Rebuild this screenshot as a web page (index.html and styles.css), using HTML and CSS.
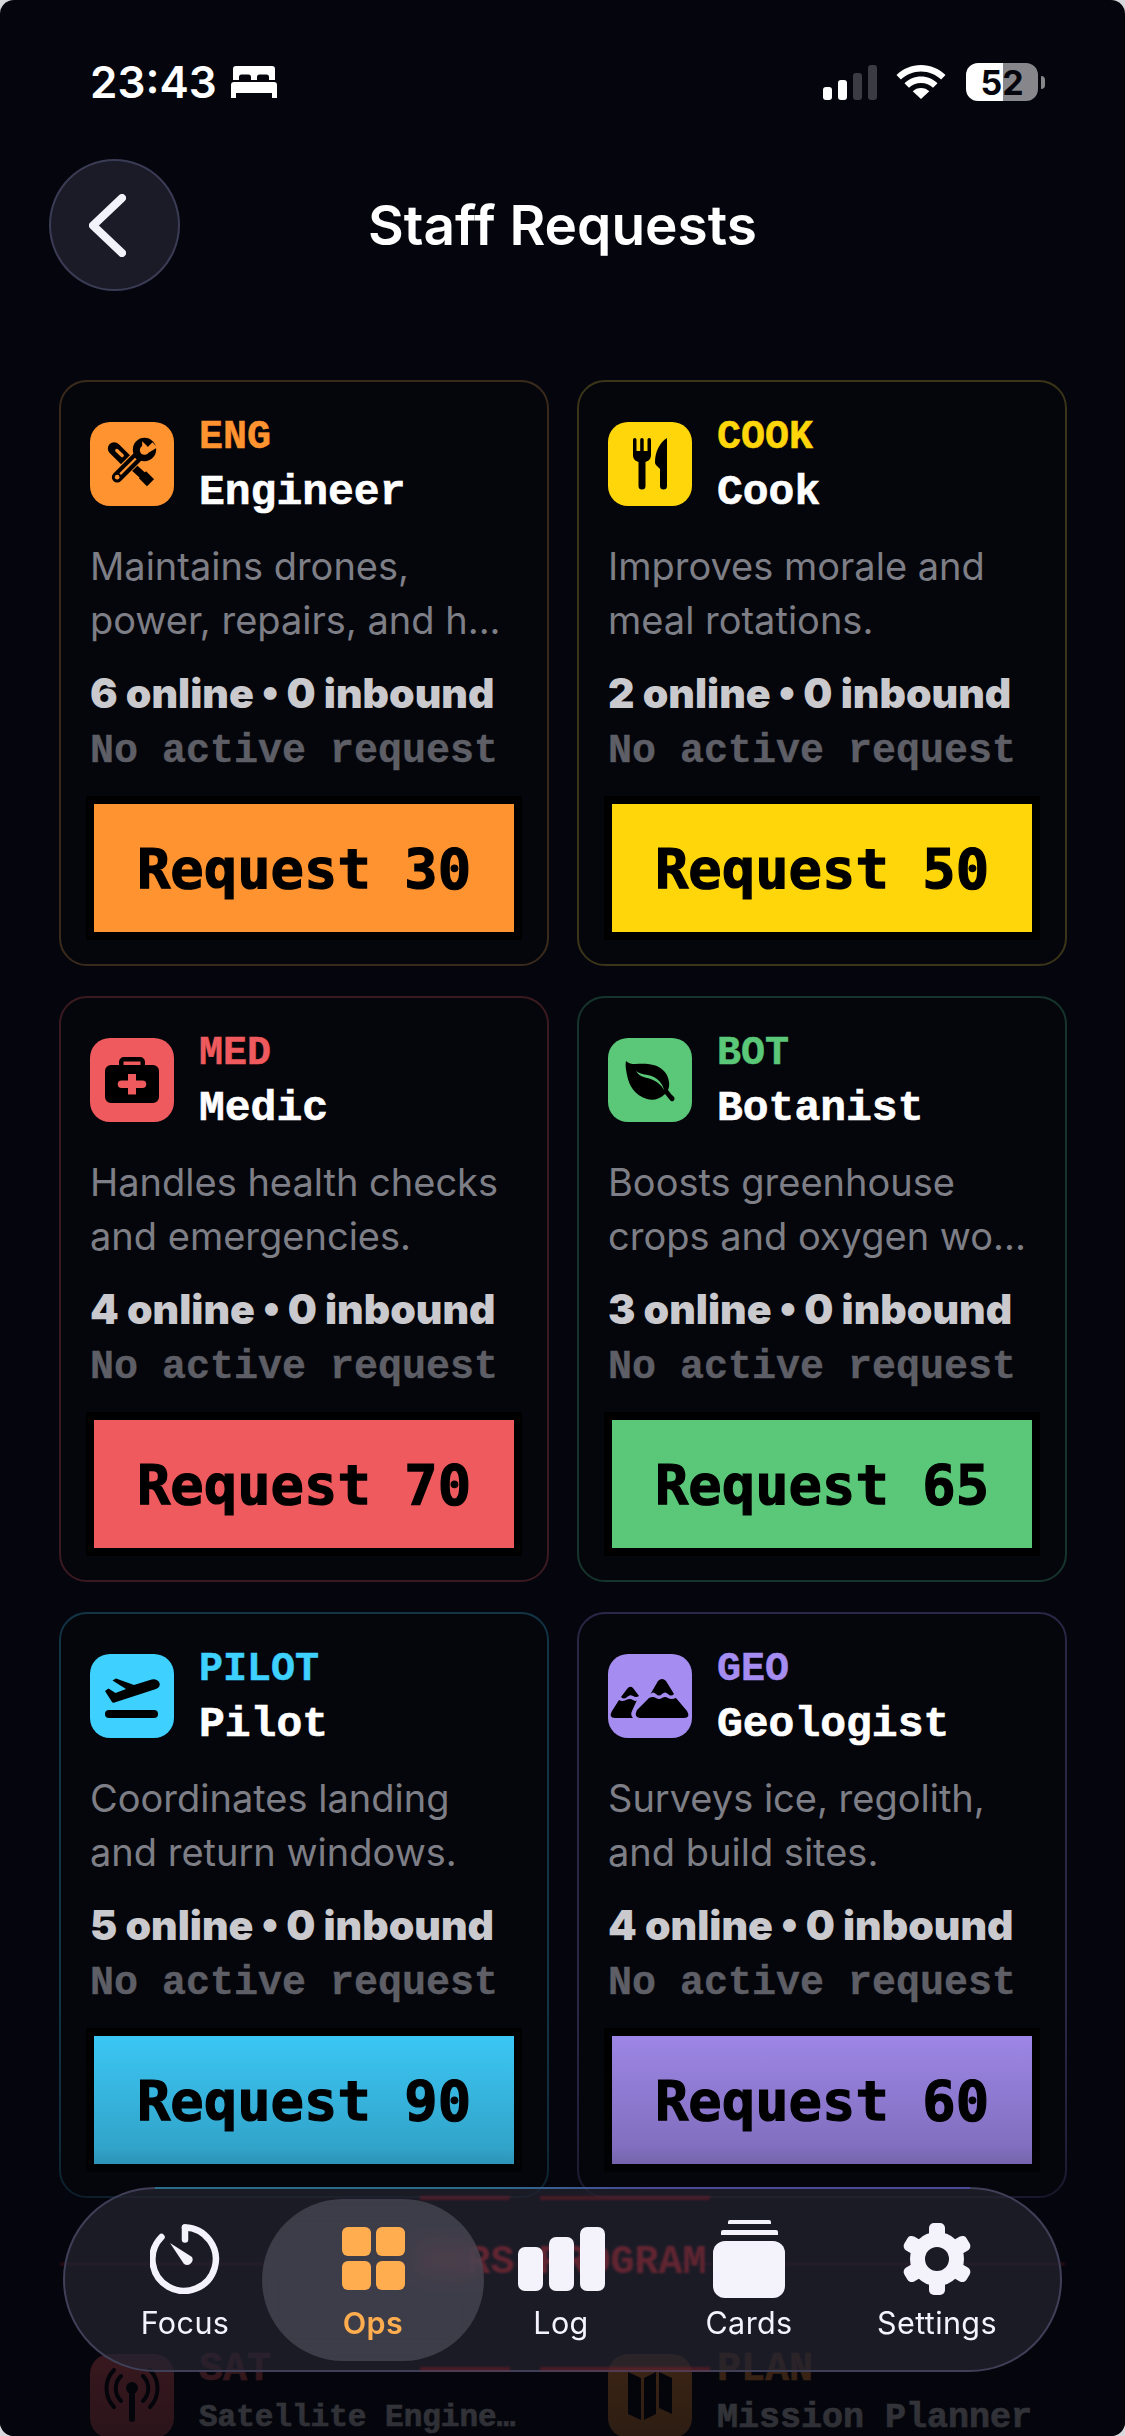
FILE: index.html
```html
<!DOCTYPE html>
<html lang="en">
<head>
    <meta charset="UTF-8">
    <meta name="viewport" content="width=device-width, initial-scale=1.0">
    <title>Staff Requests</title>
    <link rel="stylesheet" href="styles.css">
</head>
<body>
<div class="screen">
    <div class="status-bar">
        <div class="status-left">
            <span class="clock">23:43</span>
            <svg class="bed" viewBox="0 0 46 32"><path d="M5 0h36a3 3 0 0 1 3 3v11h-6v-3a2.500 2.500 0 0 0-2.500-2.500h-7A2.500 2.500 0 0 0 26 11v3h-6v-3a2.500 2.500 0 0 0-2.500-2.500h-7A2.500 2.500 0 0 0 8 11v3H2V3a3 3 0 0 1 3-3z" fill="#fff"/><path d="M3 16h40a3 3 0 0 1 3 3v13h-5v-5H5v5H0V19a3 3 0 0 1 3-3z" fill="#fff"/></svg>
        </div>
        <div class="status-right">
            <div class="signal">
                <span class="bar bar-1"></span>
                <span class="bar bar-2"></span>
                <span class="bar bar-3"></span>
                <span class="bar bar-4"></span>
            </div>
            <svg class="wifi" viewBox="0 0 50 34"><path d="M25 0c9.500 0 18 3.700 24.500 10l-4.400 4.600C39.800 9.500 32.800 6.500 25 6.500S10.200 9.500 4.900 14.600L.5 10C7 3.700 15.500 0 25 0z" fill="#fff"/><path d="M25 11.500c6.400 0 12.200 2.500 16.500 6.700l-4.500 4.600c-3.100-3-7.300-4.900-12-4.900s-8.900 1.900-12 4.900l-4.500-4.600C12.800 14 18.600 11.500 25 11.500z" fill="#fff"/><path d="M25 23c3.200 0 6.100 1.200 8.300 3.300L25 34l-8.300-7.700C18.900 24.200 21.800 23 25 23z" fill="#fff"/></svg>
            <div class="battery"><span class="battery-num">52</span></div>
            <span class="battery-nub"></span>
        </div>
    </div>

    <div class="header">
        <div class="back-btn">
            <svg viewBox="0 0 37 63"><path d="M33 4 4 31.500 33 59" fill="none" stroke="#f2f2fa" stroke-width="8" stroke-linecap="round" stroke-linejoin="round"/></svg>
        </div>
        <h1>Staff Requests</h1>
    </div>

    <div class="grid">
        <div class="card eng">
            <div class="card-top">
                <div class="icon-box">
                    <svg viewBox="54.500 57.500 168 168">
                        <path d="M85 95l40 40" stroke="#000" stroke-width="38" stroke-linecap="round" fill="none"/>
                        <path d="M93 101l16 15" stroke="#ff9330" stroke-width="10" stroke-linecap="round" fill="none"/>
                        <path d="M125 135l50 45" stroke="#000" stroke-width="22" fill="none"/>
                        <path d="M170 174l24 24" stroke="#000" stroke-width="30" fill="none"/>
                        <path d="M170 105 92 182" stroke="#ff9330" stroke-width="38" stroke-linecap="round" fill="none"/>
                        <path d="M166 109 94 181" stroke="#000" stroke-width="32" stroke-linecap="round" fill="none"/>
                        <circle cx="176" cy="98" r="35"/>
                        <path d="M150 125 103 172" stroke="#ff9330" stroke-width="7" fill="none"/>
                        <circle cx="94" cy="181" r="7" fill="#ff9330"/>
                        <circle cx="176" cy="100" r="14" fill="#ff9330"/>
                        <path d="M176 100l24-24 14 16-26 16z" fill="#ff9330"/>
                        <path d="M169 73l14 14-14 14z" fill="#ff9330"/>
                    </svg>
                </div>
                <div class="card-names">
                    <span class="code">ENG</span>
                    <span class="name">Engineer</span>
                </div>
            </div>
            <p class="desc">Maintains drones,<br>power, repairs, and h...</p>
            <p class="stats">6 online • 0 inbound</p>
            <p class="status">No active request</p>
            <div class="request-btn">Request 30</div>
        </div>
        <div class="card cook">
            <div class="card-top">
                <div class="icon-box">
                    <svg viewBox="0 0 56 56"><rect x="11" y="2" width="3.500" height="18" rx="1.700"/><rect x="18.200" y="2" width="3.500" height="18" rx="1.700"/><rect x="25.500" y="2" width="3.500" height="18" rx="1.700"/><path d="M11 15h18v4c0 4-2.500 6-5.500 7v24a3.500 3.500 0 0 1-7 0V26c-3-1-5.500-3-5.500-7z"/><path d="M45 2v48a3.500 3.500 0 0 1-7 0V33l-4-4c-.8-.8-1-2-1-3C33 16 38 6 45 2z"/></svg>
                </div>
                <div class="card-names">
                    <span class="code">COOK</span>
                    <span class="name">Cook</span>
                </div>
            </div>
            <p class="desc">Improves morale and<br>meal rotations.</p>
            <p class="stats">2 online • 0 inbound</p>
            <p class="status">No active request</p>
            <div class="request-btn">Request 50</div>
        </div>
        <div class="card med">
            <div class="card-top">
                <div class="icon-box">
                    <svg viewBox="0 0 56 56"><path d="M15 14v-4a5 5 0 0 1 5-5h16a5 5 0 0 1 5 5v4h-4.500v-4.500h-17V14z"/><path fill-rule="evenodd" d="M7 13h42a6 6 0 0 1 6 6v26a6 6 0 0 1-6 6H7a6 6 0 0 1-6-6V19a6 6 0 0 1 6-6zm17 9v6.500h-6.500a2 2 0 0 0 0 7.500H24v6.500h8V36h6.500a2 2 0 0 0 0-7.500H32V22z"/></svg>
                </div>
                <div class="card-names">
                    <span class="code">MED</span>
                    <span class="name">Medic</span>
                </div>
            </div>
            <p class="desc">Handles health checks<br>and emergencies.</p>
            <p class="stats">4 online • 0 inbound</p>
            <p class="status">No active request</p>
            <div class="request-btn">Request 70</div>
        </div>
        <div class="card bot">
            <div class="card-top">
                <div class="icon-box">
                    <svg viewBox="0 0 56 56"><path fill-rule="evenodd" d="M4 9c5 5 12 2 22 3 12 1 20 8 21 18 .5 3 0 6-1 8 2 3 4 5 6 7 2 3-2 6-4 3-2-2-3-4-5-6-5 5-12 7-18 5C12 43 7 33 5 23 4 18 3 13 4 9zm10 10c6 5 14 2 21 8 4 3 6 7 7 11-3-5-6-8-11-10-6-3-13-2-17-9z"/></svg>
                </div>
                <div class="card-names">
                    <span class="code">BOT</span>
                    <span class="name">Botanist</span>
                </div>
            </div>
            <p class="desc">Boosts greenhouse<br>crops and oxygen wo...</p>
            <p class="stats">3 online • 0 inbound</p>
            <p class="status">No active request</p>
            <div class="request-btn">Request 65</div>
        </div>
        <div class="card pilot">
            <div class="card-top">
                <div class="icon-box">
                    <svg viewBox="0 0 56 56"><path d="M8 34 1 23l3.500-2.500 7 4.500L22 21 8.500 12.500 12 10.500 30 17l16-5c4-1.500 8-.5 9.500 3 1 3-1 5-3.500 6L10.500 34.500c-1 .3-1.800.3-2.500-.5z"/><rect x="1" y="42" width="53" height="8" rx="4"/></svg>
                </div>
                <div class="card-names">
                    <span class="code">PILOT</span>
                    <span class="name">Pilot</span>
                </div>
            </div>
            <p class="desc">Coordinates landing<br>and return windows.</p>
            <p class="stats">5 online • 0 inbound</p>
            <p class="status">No active request</p>
            <div class="request-btn">Request 90</div>
        </div>
        <div class="card geo">
            <div class="card-top">
                <div class="icon-box">
                    <svg class="geo-icon" viewBox="0 0 84 84"><path d="M50 27q4-4 8 0l8 13q-3 3-6 0t-6 0-6 0-5.500 0z"/><path d="M41 44q4-2 7 0t6 0 6 0 8 0l11 13q4 7-3 7H34q-9 0-5-8z"/><path d="M19 35q3-4 6-1l6 8q-3 2-6 0t-6 1-6 0z"/><path d="M11 46q3 2 7 0t7 0 4 0l-5 11q-2 4 1 7H7q-7 0-3-7z"/></svg>
                </div>
                <div class="card-names">
                    <span class="code">GEO</span>
                    <span class="name">Geologist</span>
                </div>
            </div>
            <p class="desc">Surveys ice, regolith,<br>and build sites.</p>
            <p class="stats">4 online • 0 inbound</p>
            <p class="status">No active request</p>
            <div class="request-btn">Request 60</div>
        </div>
    </div>

    <div class="section-title">MARS PROGRAM</div>

    <div class="grid">
        <div class="card sat">
            <div class="card-top">
                <div class="icon-box">
                    <svg viewBox="0 0 56 56"><circle cx="28" cy="20" r="6"/><rect x="25" y="24" width="6" height="30" rx="3"/><path d="M17 8C10 15 10 26 17 33M39 8c7 7 7 18 0 25M10 2C0 12 0 29 10 39M46 2c10 10 10 27 0 37" fill="none" stroke="#000" stroke-width="4" stroke-linecap="round"/></svg>
                </div>
                <div class="card-names">
                    <span class="code">SAT</span>
                    <span class="name name-long">Satellite Engine…</span>
                </div>
            </div>
        </div>
        <div class="card plan">
            <div class="card-top">
                <div class="icon-box">
                    <svg viewBox="0 0 56 56"><path d="M6 4l13 6v42L6 46zM22 10l12-6v42l-12 6zM37 4l13 6v36l-13-6z"/></svg>
                </div>
                <div class="card-names">
                    <span class="code">PLAN</span>
                    <span class="name name-mid">Mission Planner</span>
                </div>
            </div>
        </div>
    </div>

    <div class="bottom-fade"></div>

    <nav class="tab-bar">
        <span class="streak streak-top-a"></span>
        <span class="streak streak-top-b"></span>
        <span class="streak streak-bottom-a"></span>
        <span class="streak streak-bottom-b"></span>
        <div class="tab">
            <div class="tab-slot">
                <svg class="focus-icon" viewBox="0 0 70 70"><path d="M35 3.500a31.700 31.700 0 1 1-23.500 9.500" fill="none" stroke="#f4f3fb" stroke-width="6.500" stroke-linecap="round"/><path d="M35 3.500v12" fill="none" stroke="#f4f3fb" stroke-width="6.500" stroke-linecap="round"/><path d="M20 19l22 14a5.500 5.500 0 0 1-8 7z" fill="#f4f3fb"/></svg>
            </div>
            <span>Focus</span>
        </div>
        <div class="tab active">
            <div class="tab-slot">
                <div class="ops-icon"><i></i><i></i><i></i><i></i></div>
            </div>
            <span>Ops</span>
        </div>
        <div class="tab">
            <div class="tab-slot">
                <div class="log-icon"><i></i><i></i><i></i></div>
            </div>
            <span>Log</span>
        </div>
        <div class="tab">
            <div class="tab-slot">
                <div class="cards-icon"><i></i><i></i><i></i></div>
            </div>
            <span>Cards</span>
        </div>
        <div class="tab">
            <div class="tab-slot">
                <svg class="gear-icon" viewBox="-37 -37 74 74">
                    <g fill="#f4f3fb">
                        <circle r="27"/>
                        <rect x="-8" y="-36" width="16" height="20" rx="5"/>
                        <rect x="-8" y="-36" width="16" height="20" rx="5" transform="rotate(60)"/>
                        <rect x="-8" y="-36" width="16" height="20" rx="5" transform="rotate(120)"/>
                        <rect x="-8" y="-36" width="16" height="20" rx="5" transform="rotate(180)"/>
                        <rect x="-8" y="-36" width="16" height="20" rx="5" transform="rotate(240)"/>
                        <rect x="-8" y="-36" width="16" height="20" rx="5" transform="rotate(300)"/>
                    </g>
                    <circle r="12" fill="#1b1b25"/>
                </svg>
            </div>
            <span>Settings</span>
        </div>
    </nav>
</div>
</body>
</html>
```
FILE: styles.css
```css
* {
    box-sizing: border-box;
}
html, body {
    margin: 0;
    padding: 0;
    background: #d8d8dc;
}
.screen {
    position: relative;
    width: 1125px;
    height: 2436px;
    overflow: hidden;
    border-radius: 14px;
    background: #05060d;
    font-family: Inter, "Liberation Sans", sans-serif;
    color: #fff;
}

/* status bar */
.status-bar {
    display: flex;
    justify-content: space-between;
    align-items: center;
    height: 38px;
    margin-top: 63px;
    padding: 0 80px 0 90px;
}
.status-left {
    display: flex;
    align-items: center;
    gap: 14px;
}
.clock {
    font-size: 44px;
    font-weight: 600;
    line-height: 38px;
}
.bed {
    width: 46px;
    height: 32px;
}
.status-right {
    display: flex;
    align-items: center;
}
.signal {
    display: flex;
    align-items: flex-end;
    gap: 6px;
    height: 35px;
    margin-right: 19px;
}
.bar {
    width: 9px;
    border-radius: 3px;
    background: #fff;
}
.bar-1 { height: 13px; }
.bar-2 { height: 20px; }
.bar-3 { height: 27px; background: #3a3b43; }
.bar-4 { height: 35px; background: #3a3b43; }
.wifi {
    width: 50px;
    height: 34px;
    margin-right: 20px;
}
.battery {
    display: flex;
    align-items: center;
    justify-content: center;
    width: 72px;
    height: 38px;
    border-radius: 12px;
    background: linear-gradient(to right, #fff 51%, #87878b 51%);
}
.battery-num {
    color: #05060d;
    font-size: 34px;
    font-weight: 700;
}
.battery-nub {
    width: 4px;
    height: 13px;
    margin-left: 3px;
    border-radius: 0 4px 4px 0;
    background: #87878b;
}

/* header */
.header {
    position: relative;
    display: flex;
    align-items: center;
    justify-content: center;
    height: 132px;
    margin: 58px 0 89px;
}
.back-btn {
    position: absolute;
    left: 49px;
    top: 0;
    display: flex;
    align-items: center;
    justify-content: center;
    width: 131px;
    height: 132px;
    padding-right: 14px;
    border: 2px solid #3a3c55;
    border-radius: 50%;
    background: #1a1b26;
}
.back-btn svg {
    width: 37px;
    height: 63px;
}
h1 {
    margin: 0;
    font-size: 55px;
    font-weight: 600;
}

/* cards */
.grid {
    display: grid;
    grid-template-columns: 490px 490px;
    column-gap: 28px;
    row-gap: 30px;
    padding-left: 59px;
}
.card {
    height: 586px;
    padding: 40px 29px 0;
    border: 2px solid var(--edge);
    border-radius: 28px;
    background: #05060b;
}
.card-top {
    display: flex;
    align-items: flex-start;
    gap: 25px;
}
.icon-box {
    display: flex;
    align-items: center;
    justify-content: center;
    flex: none;
    width: 84px;
    height: 84px;
    border-radius: 20px;
    background: var(--accent);
}
.icon-box svg {
    width: 56px;
    height: 56px;
}
.icon-box .geo-icon {
    width: 84px;
    height: 84px;
}
.card-names {
    display: flex;
    flex-direction: column;
    margin-top: -6px;
    white-space: nowrap;
}
.code {
    color: var(--accent);
    font-family: "Liberation Mono", monospace;
    font-size: 40px;
    font-weight: 700;
    line-height: 44px;
    -webkit-text-stroke: .5px currentColor;
}
.name {
    margin-top: 8px;
    font-family: "Liberation Mono", monospace;
    font-size: 43px;
    font-weight: 700;
    line-height: 50px;
    -webkit-text-stroke: .6px currentColor;
}
.name-long, .name-mid {
    margin-top: 10px;
    line-height: 32px;
}
.name-long { font-size: 31px; }
.name-mid { font-size: 35px; }
.desc {
    margin: 21px 0 0;
    color: #7d7e86;
    font-size: 38px;
    line-height: 54px;
    white-space: nowrap;
}
.stats {
    margin: 18px 0 0;
    color: #c9c9ce;
    font-size: 41px;
    font-weight: 900;
    line-height: 56px;
    white-space: nowrap;
}
.status {
    margin: 3px 0 0;
    color: #5e5f66;
    font-family: "Liberation Mono", monospace;
    font-size: 40px;
    font-weight: 700;
    line-height: 56px;
    white-space: nowrap;
    -webkit-text-stroke: .4px currentColor;
}
.request-btn {
    display: flex;
    align-items: center;
    justify-content: center;
    width: 420px;
    height: 128px;
    margin: 24px 0 0 4px;
    background: var(--accent);
    box-shadow: 0 0 0 8px #000;
    color: #000;
    font-family: "DejaVu Sans Mono", monospace;
    font-size: 55.500px;
    font-weight: 700;
    -webkit-text-stroke: 1.2px #000;
}
.eng { --accent: #ff9330; --edge: #3a2a1c; }
.cook { --accent: #ffd60a; --edge: #3a3418; }
.med { --accent: #ee5a5d; --edge: #3a1a20; }
.bot { --accent: #5ac878; --edge: #16342b; }
.pilot { --accent: #3ed0ff; --edge: #123444; }
.geo { --accent: #a48cf0; --edge: #2a2646; }
.sat { --accent: #ee5a5d; --edge: #05060d; }
.plan { --accent: #ff9330; --edge: #05060d; }

.section-title {
    position: relative;
    z-index: 1;
    height: 114px;
    margin: 0 60px;
    background: linear-gradient(rgba(225,35,45,.25), rgba(225,35,45,.25)) center 65px / 100% 2px no-repeat;
    color: #ff2a35;
    font-family: "Liberation Mono", monospace;
    font-size: 40px;
    font-weight: 700;
    line-height: 130px;
    text-align: center;
    filter: blur(.8px);
}

/* darkens the content under the tab bar */
.bottom-fade {
    position: absolute;
    left: 0;
    right: 0;
    bottom: 0;
    height: 430px;
    background: linear-gradient(to bottom, rgba(5,6,13,0) 0%, rgba(5,6,13,.22) 33%, rgba(5,6,13,.7) 55%, rgba(5,6,13,.84) 100%);
}

/* tab bar */
.tab-bar {
    position: absolute;
    z-index: 2;
    left: 63px;
    top: 2187px;
    display: flex;
    align-items: center;
    width: 999px;
    height: 185px;
    padding: 0 26px;
    border: 2px solid #3f4058;
    border-radius: 93px;
    background: rgba(36,36,48,.72);
}
.tab-bar::after {
    content: "";
    position: absolute;
    top: -2px;
    left: 90px;
    right: 90px;
    height: 2px;
    background: linear-gradient(to right, #2a6d8a, #2a6d8a 40%, #4a4a96 60%, #4a4a96);
}
.streak {
    position: absolute;
    height: 4px;
    background: rgba(190,30,40,.28);
    filter: blur(1px);
}
.streak-top-a { top: 7px; left: 355px; width: 90px; }
.streak-top-b { top: 7px; left: 475px; width: 170px; }
.streak-bottom-a { bottom: -1px; left: 355px; width: 90px; }
.streak-bottom-b { bottom: -1px; left: 475px; width: 170px; }
.tab {
    position: relative;
    display: flex;
    flex-direction: column;
    align-items: center;
    justify-content: center;
    flex: none;
    width: 188px;
    height: 162px;
    color: #f4f3fb;
    font-size: 30.500px;
    letter-spacing: .4px;
    line-height: 36px;
}
.tab.active {
    color: #ffad4f;
    font-weight: 600;
}
.tab.active::before {
    content: "";
    position: absolute;
    z-index: -1;
    top: 0;
    left: -17px;
    width: 222px;
    height: 162px;
    border-radius: 81px;
    background: rgba(90,90,102,.55);
    backdrop-filter: blur(12px);
}
.tab-slot {
    display: flex;
    align-items: center;
    justify-content: center;
    height: 80px;
    margin-bottom: 6px;
}
.focus-icon {
    width: 70px;
    height: 70px;
}
.gear-icon {
    width: 74px;
    height: 74px;
}
.ops-icon {
    display: grid;
    grid-template-columns: 29px 29px;
    gap: 5px;
}
.ops-icon i {
    height: 29px;
    border-radius: 6px;
    background: #ffad4f;
}
.log-icon {
    display: flex;
    align-items: flex-end;
    gap: 6px;
    height: 64px;
}
.log-icon i {
    width: 25px;
    border-radius: 7px;
    background: #f4f3fb;
}
.log-icon i:nth-child(1) { height: 44px; }
.log-icon i:nth-child(2) { height: 54px; }
.log-icon i:nth-child(3) { height: 64px; }
.cards-icon {
    display: flex;
    flex-direction: column;
    align-items: center;
    gap: 6px;
}
.cards-icon i {
    background: #f4f3fb;
}
.cards-icon i:nth-child(1) { width: 43px; height: 4px; border-radius: 2px 2px 0 0; }
.cards-icon i:nth-child(2) { width: 57px; height: 5px; border-radius: 2px 2px 0 0; }
.cards-icon i:nth-child(3) { width: 72px; height: 57px; border-radius: 12px; }
```
